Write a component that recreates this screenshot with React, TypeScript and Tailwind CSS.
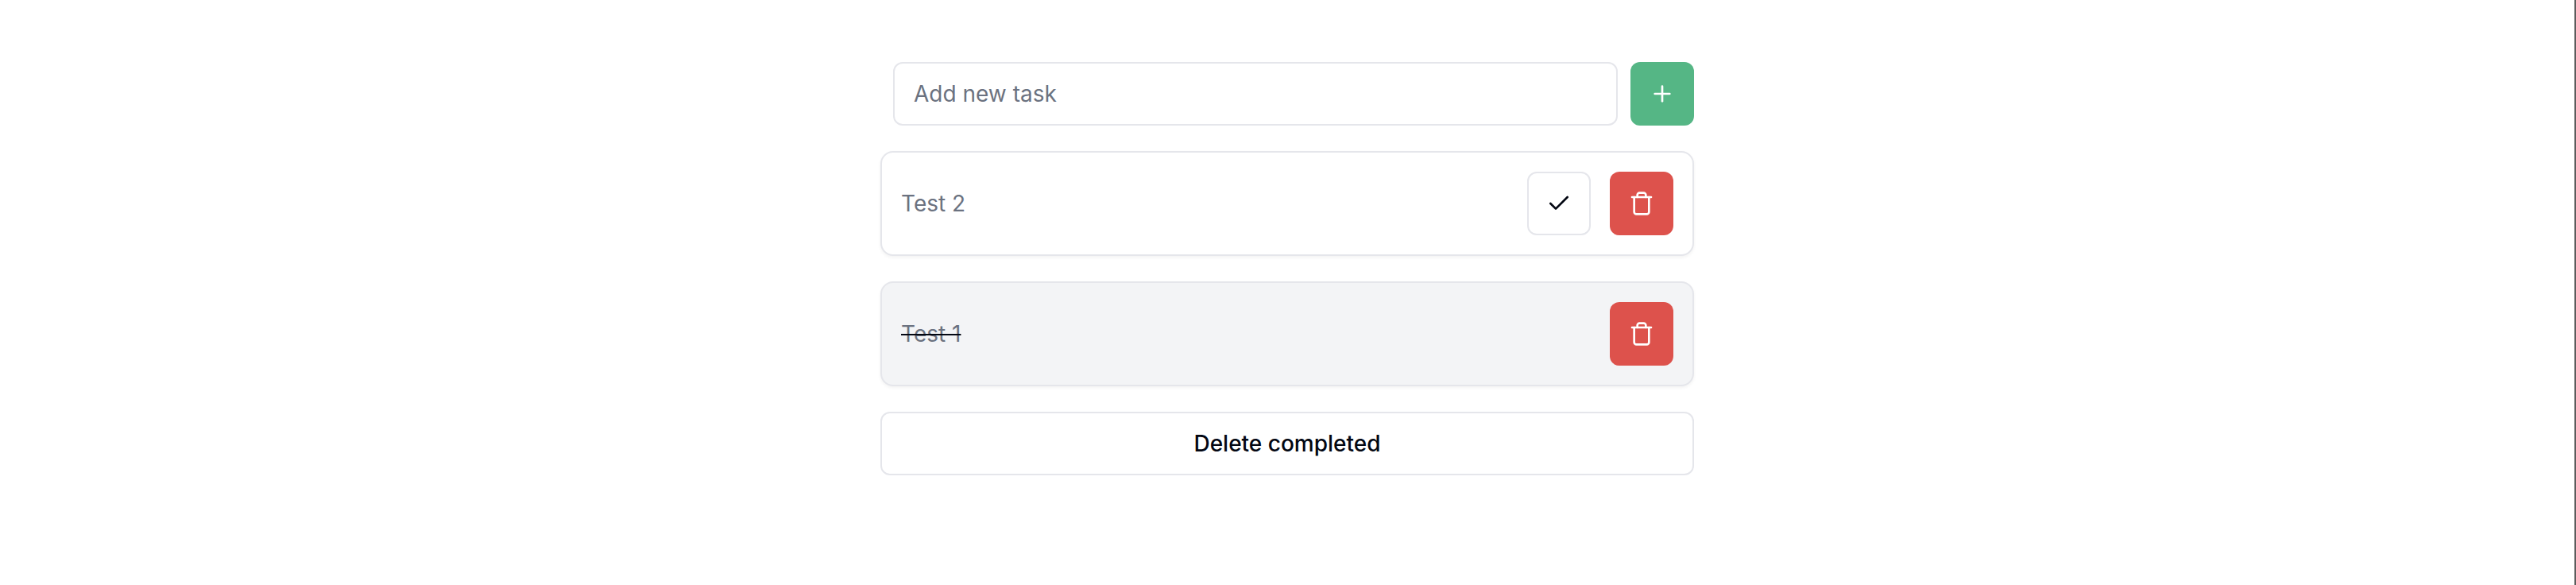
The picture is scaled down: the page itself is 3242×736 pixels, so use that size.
import { useState } from "react";
import type { ReactNode } from "react";

const iconButton =
  "flex size-20 shrink-0 items-center justify-center rounded-xl";

function Icon({ children }: { children: ReactNode }) {
  return (
    <svg width="32" height="32" viewBox="0 0 24 24" fill="none" stroke="currentColor" strokeWidth="2" strokeLinecap="round" strokeLinejoin="round">
      {children}
    </svg>
  );
}

function PlusIcon() {
  return (
    <Icon>
      <path d="M5 12h14" />
      <path d="M12 5v14" />
    </Icon>
  );
}

function CheckIcon() {
  return (
    <Icon>
      <path d="M20 6 9 17l-5-5" />
    </Icon>
  );
}

function TrashIcon() {
  return (
    <Icon>
      <path d="M3 6h18" />
      <path d="M19 6v14c0 1-1 2-2 2H7c-1 0-2-1-2-2V6" />
      <path d="M8 6V4c0-1 1-2 2-2h4c1 0 2 1 2 2v2" />
    </Icon>
  );
}

type Task = { id: number; title: string; done: boolean };

export default function App() {
  const [tasks, setTasks] = useState<Task[]>([
    { id: 2, title: "Test 2", done: false },
    { id: 1, title: "Test 1", done: true },
  ]);
  const [title, setTitle] = useState("");

  const add = () => {
    if (!title.trim()) return;
    setTasks([{ id: Date.now(), title, done: false }, ...tasks]);
    setTitle("");
  };

  return (
    <main className="flex min-h-screen justify-center border-r-2 border-[#5c5c5c] bg-white pt-[78px] font-['Inter',sans-serif] text-[28px] leading-10 text-[#030712]">
      <div className="flex w-[1024px] flex-col gap-8">
        <div className="flex gap-4 pl-4">
          <input
            value={title}
            onChange={(e) => setTitle(e.target.value)}
            placeholder="Add new task"
            className="h-20 min-w-0 flex-1 rounded-xl border-2 border-[#e5e6eb] px-6 outline-none placeholder:text-[#6b7280]"
          />
          <button aria-label="Add" onClick={add} className={`${iconButton} bg-[#55b685] text-white`}>
            <PlusIcon />
          </button>
        </div>
        {tasks.map((task) => (
          <div
            key={task.id}
            className={`flex items-center gap-6 rounded-2xl border-2 border-[#e5e6eb] p-6 shadow-[0_2px_4px_0_rgb(0_0_0/0.05)] ${task.done ? "bg-[#f3f4f6]" : "bg-white"}`}
          >
            <div className={`flex-1 ${task.done ? "line-through decoration-2" : ""}`}>
              <span className="text-[#6b7280]">{task.title}</span>
            </div>
            {!task.done && (
              <button
                aria-label="Complete"
                onClick={() => setTasks(tasks.map((t) => (t.id === task.id ? { ...t, done: true } : t)))}
                className={`${iconButton} border-2 border-[#e5e6eb] bg-white`}
              >
                <CheckIcon />
              </button>
            )}
            <button
              aria-label="Delete"
              onClick={() => setTasks(tasks.filter((t) => t.id !== task.id))}
              className={`${iconButton} bg-[#dd524c] text-white`}
            >
              <TrashIcon />
            </button>
          </div>
        ))}
        <button
          onClick={() => setTasks(tasks.filter((t) => !t.done))}
          className="h-20 rounded-xl border-2 border-[#e5e6eb] font-medium"
        >
          Delete completed
        </button>
      </div>
    </main>
  );
}
